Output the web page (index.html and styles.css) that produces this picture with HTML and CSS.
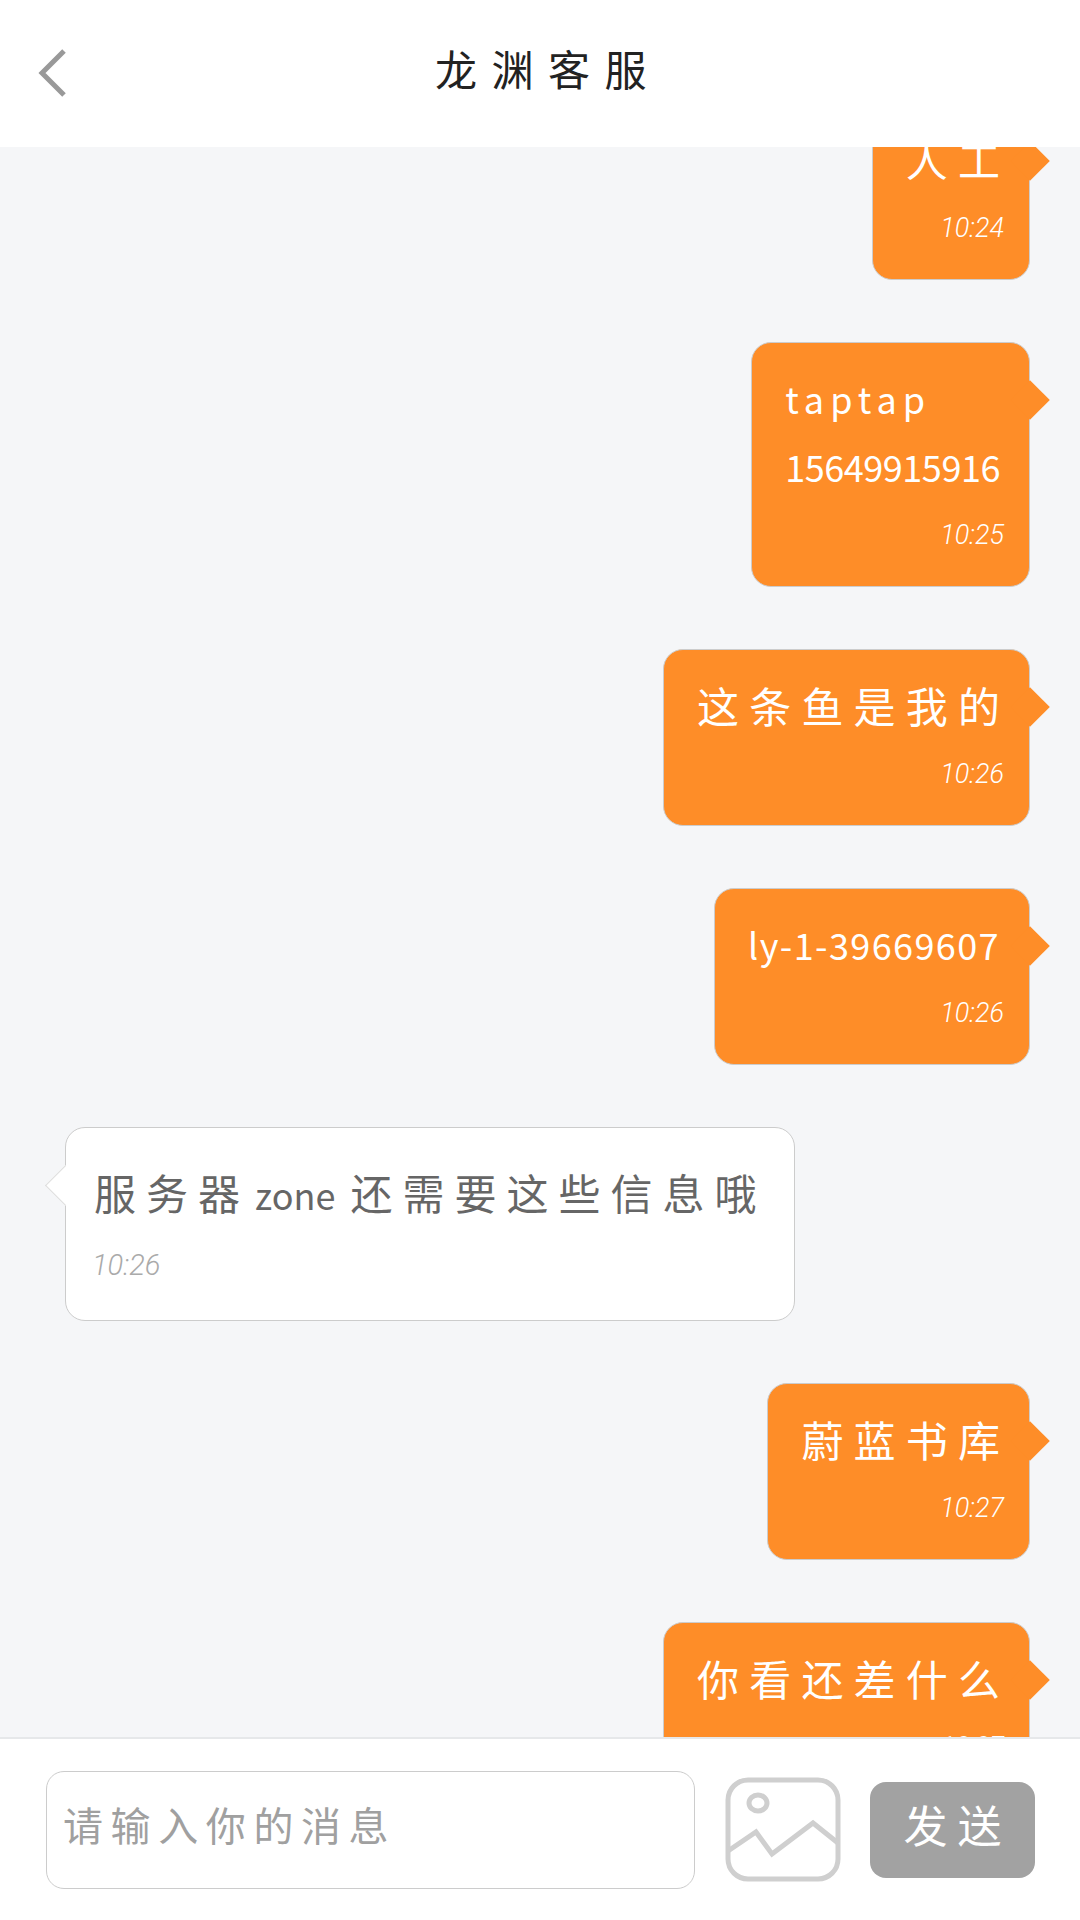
FILE: index.html
```html
<!DOCTYPE html>
<html lang="zh-CN">
<head>
<meta charset="utf-8">
<title>龙渊客服</title>
<link rel="stylesheet" href="styles.css">
</head>
<body>
<div class="app">
  <header class="topbar">
    <svg class="back" viewBox="0 0 30 50" width="30" height="50"><path d="M27 3 L5 25 L27 47" fill="none" stroke="#999" stroke-width="5"/></svg>
    <h1 class="title">龙渊客服</h1>
  </header>
  <main class="chat">
    <div class="list">
      <div class="bubble mine"><p class="msg">人工</p><p class="time">10:24</p></div>
      <div class="bubble mine"><p class="msg latin"><span class="wide">taptap</span><br>15649915916</p><p class="time">10:25</p></div>
      <div class="bubble mine"><p class="msg">这条鱼是我的</p><p class="time">10:26</p></div>
      <div class="bubble mine"><p class="msg latin spaced">ly-1-39669607</p><p class="time">10:26</p></div>
      <div class="bubble theirs"><p class="msg">服务器<span class="zone">zone</span>还需要这些信息哦</p><p class="time">10:26</p></div>
      <div class="bubble mine"><p class="msg">蔚蓝书库</p><p class="time">10:27</p></div>
      <div class="bubble mine"><p class="msg">你看还差什么</p><p class="time">10:27</p></div>
    </div>
  </main>
  <footer class="composer">
    <div class="input">请输入你的消息</div>
    <svg class="pic" viewBox="0 0 116 105" width="116" height="105" fill="none" stroke="#cfcfcf" stroke-width="5">
      <rect x="3" y="3" width="110" height="99" rx="20"/>
      <ellipse cx="33" cy="26" rx="9" ry="8"/>
      <path d="M3 74 L31 55 L47 77 L88 46 L113 66"/>
    </svg>
    <button class="send">发送</button>
  </footer>
</div>
</body>
</html>
```
FILE: styles.css
```css
* { box-sizing: border-box; }
html, body { margin: 0; padding: 0; }
body { font-family: "Noto Sans CJK SC", "Noto Sans", sans-serif; background: #fff; }
.app { width: 1080px; height: 1920px; display: flex; flex-direction: column; overflow: hidden; }

.topbar { height: 147px; flex: none; background: #fff; display: flex; align-items: center; padding-left: 37px; position: relative; }
.back { flex: none; margin-top: -1px; }
.title { position: absolute; left: 0; right: 0; top: 38px; margin: 0; padding-left: 16px; text-align: center; font-size: 42px; line-height: 60px; font-weight: 400; letter-spacing: 14.5px; color: #222; }

.chat { flex: 1; min-height: 0; overflow: hidden; background: #f5f6f8; padding: 0 50px 0 65px; }
.list { display: flex; flex-direction: column; align-items: flex-end; gap: 62px; margin-top: -44px; }

.bubble { position: relative; border: 1px solid #ccc; border-radius: 20px; padding: 21px 29px 17px 33px; white-space: nowrap; }
.bubble::after { content: ""; position: absolute; top: 43px; width: 28px; height: 28px; transform: rotate(45deg); }
.mine { background: #fe8d28; color: #fff; }
.mine::after { right: -15px; background: #fe8d28; }
.theirs { align-self: flex-start; background: #fff; color: #666; padding: 30px 38px 21px 28px; }
.theirs::after { left: -15px; background: #fff; border-left: 1px solid #ddd; border-bottom: 1px solid #ddd; }

.msg { margin: 0 -10.2px 0 0; font-size: 42px; line-height: 68px; letter-spacing: 10.2px; }
.latin { margin-right: 0; font-size: 36px; letter-spacing: -0.45px; }
.spaced { letter-spacing: 1.4px; }
.wide { letter-spacing: 6px; }
.zone { margin: 0 15px 0 5px; font-size: 36px; letter-spacing: 0; line-height: 1; }
.theirs .msg { letter-spacing: 10px; margin-right: -10px; }
.time { margin: 1px -4px 0 0; font-family: Roboto, sans-serif; font-style: italic; font-weight: 300; font-size: 27px; line-height: 68px; text-align: right; }
.theirs .time { margin: 5px 0 0 -2px; font-size: 29px; text-align: left; color: #aaa; }

.composer { height: 183px; flex: none; background: #fff; border-top: 2px solid #e6e8ea; display: flex; align-items: center; padding: 0 45px 0 46px; position: relative; }
.input { width: 649px; height: 118px; flex: none; border: 1.5px solid #ccc; border-radius: 18px; padding: 0 0 12px 16px; display: flex; align-items: center; font-size: 40px; letter-spacing: 7.6px; color: #a0a0a0; background: #fff; }
.pic { flex: none; margin-left: 30px; }
.send { flex: none; width: 165px; height: 96px; margin-left: 29px; border: 0; border-radius: 16px; background: #a2a2a2; color: #fff; font-family: inherit; font-size: 44px; letter-spacing: 10px; padding: 0 0 12px 10px; }
```
